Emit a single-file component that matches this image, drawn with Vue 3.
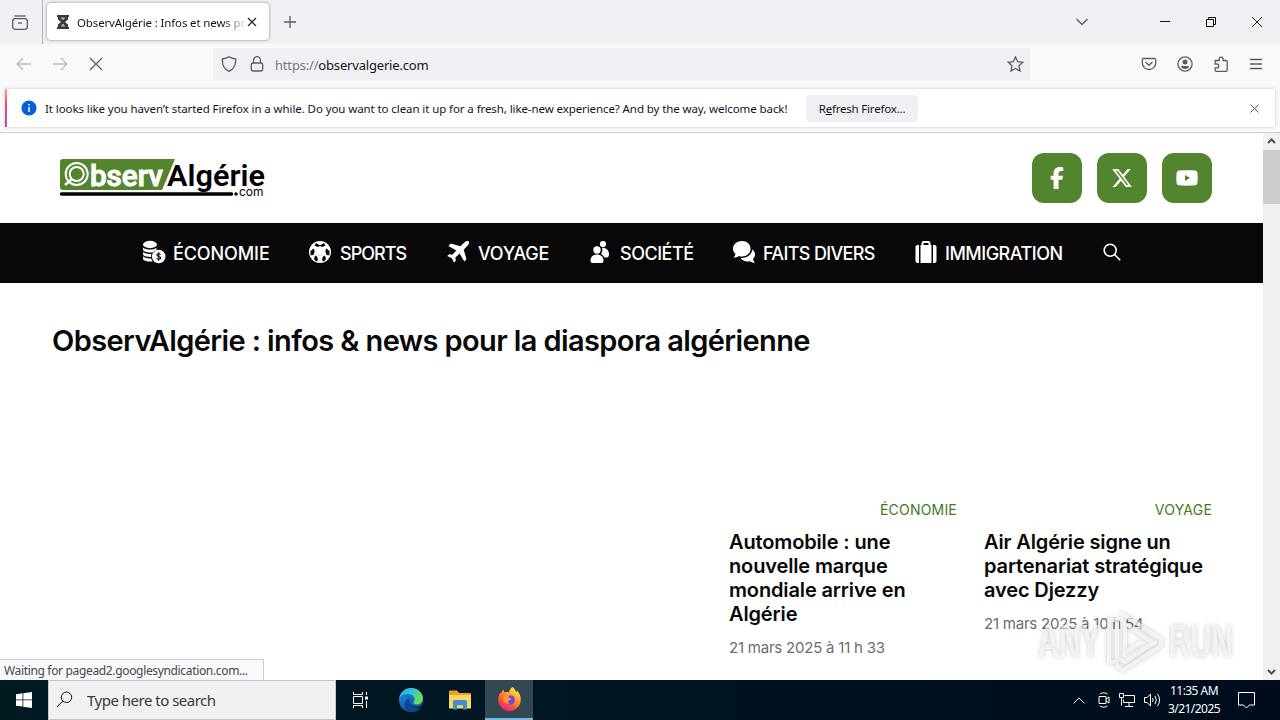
<template>
  <div class="screen">
    <!-- Tab strip -->
    <div class="tabstrip">
      <div class="view-box">
        <svg width="18" height="18" viewBox="0 0 18 18" class="line">
          <path d="M3.5 2h11" />
          <rect x="1.7" y="4.7" width="14.6" height="10.6" rx="2.5" />
          <path d="M7 9h4" />
        </svg>
      </div>
      <div class="tab">
        <svg width="12" height="14" viewBox="0 0 12 14" class="hourglass">
          <path d="M0 0h12v2h-1v2.500L8 7l3 2.500V12h1v2H0v-2h1V9.500L4 7 1 4.500V2H0z" fill="#38383d" />
          <path d="M3.500 2.500h5L6 5.200zM6 8.500l2.500 3h-5z" fill="#b5b5ba" />
        </svg>
        <span class="tab-title">ObservAlgérie : Infos et news po</span>
        <svg width="10" height="10" viewBox="0 0 10 10" class="dark">
          <path d="M1 1l8 8M9 1l-8 8" />
        </svg>
      </div>
      <svg width="12" height="12" viewBox="0 0 12 12" class="line plus">
        <path d="M6 0v12M0 6h12" />
      </svg>
      <svg width="14" height="8" viewBox="0 0 14 8" class="line chevron">
        <path d="M1.500 1L7 6.500 12.500 1" />
      </svg>
      <div class="window-buttons">
        <svg width="10" height="10" viewBox="0 0 10 10" class="black">
          <path d="M0 4.500h10" />
        </svg>
        <svg width="10" height="10" viewBox="0 0 10 10" class="black">
          <path d="M.5 2.500h7v7h-7zM2.500 2.500v-2h7v7h-2" />
        </svg>
        <svg width="10" height="10" viewBox="0 0 10 10" class="black thin">
          <path d="M0 0l10 10M10 0L0 10" />
        </svg>
      </div>
    </div>

    <!-- Address bar -->
    <div class="toolbar">
      <svg width="16" height="16" viewBox="0 0 16 16" class="line faded">
        <path d="M15 8H1.500M7 2L1.200 8 7 14" />
      </svg>
      <svg width="16" height="16" viewBox="0 0 16 16" class="line faded">
        <path d="M1 8h13.500M9 2l5.800 6L9 14" />
      </svg>
      <svg width="16" height="16" viewBox="0 0 16 16" class="line">
        <path d="M2 2l12 12M14 2L2 14" />
      </svg>
      <div class="urlbar">
        <svg width="16" height="16" viewBox="0 0 16 16" class="line">
          <path d="M8 .8c2 1.300 4.300 1.900 6.700 2.200C14.900 8.500 13.500 13 8 15.300 2.500 13 1.100 8.500 1.300 3 3.700 2.700 6 2.100 8 .8z" />
        </svg>
        <svg width="14" height="16" viewBox="0 0 14 16" class="line">
          <rect x="1.300" y="7" width="11.400" height="8" rx="1.800" />
          <path d="M3.500 7V4.200a3.500 3.500 0 0 1 7 0V7" />
        </svg>
        <span class="url"><i>https://</i>observalgerie.com</span>
        <svg width="17" height="16" viewBox="0 0 17 16" class="line">
          <path d="M8.500 1l2.200 4.700 5.100.6-3.800 3.500 1 5.100-4.500-2.500L4 14.900l1-5.100L1.200 6.300l5.100-.6z" />
        </svg>
      </div>
      <div class="tools">
        <svg width="16" height="16" viewBox="0 0 16 16" class="line">
          <path d="M2.500 2.500h11a1.200 1.200 0 0 1 1.200 1.200V7a6.700 6.500 0 0 1-13.400 0V3.700a1.200 1.200 0 0 1 1.200-1.200z" />
          <path d="M4.500 6L8 9.300 11.500 6" />
        </svg>
        <svg width="16" height="16" viewBox="0 0 16 16" class="line">
          <circle cx="8" cy="8" r="7.100" />
          <circle cx="8" cy="6" r="2.500" fill="#5b5b66" stroke="none" />
          <path d="M4 10h8c0 1.800-1.500 3-4 3s-4-1.200-4-3z" fill="#5b5b66" stroke="none" />
        </svg>
        <svg width="16" height="16" viewBox="0 0 16 16" class="line">
          <path d="M2.200 4.500h4V3a1.900 1.900 0 0 1 3.800 0v1.500h3.200a1 1 0 0 1 1 1v8.800a1 1 0 0 1-1 1h-10a1 1 0 0 1-1-1v-2.500h1.700a1.900 1.900 0 0 0 0-3.800H2.200z" />
        </svg>
        <svg width="14" height="12" viewBox="0 0 14 12" class="line">
          <path d="M1 1.500h12M1 6h12M1 10.500h12" />
        </svg>
      </div>
    </div>

    <!-- Notification -->
    <div class="notice-row">
      <div class="notice">
        <svg width="16" height="16" viewBox="0 0 16 16">
          <circle cx="8" cy="8" r="7.600" fill="#0560df" />
          <path d="M8 4v1.600M8 7v5" stroke="#fff" stroke-width="1.500" />
        </svg>
        <span class="notice-text">It looks like you haven’t started Firefox in a while. Do you want to clean it up for a fresh, like-new experience? And by the way, welcome back!</span>
        <button class="refresh">R<u>e</u>fresh Firefox...</button>
        <svg width="9" height="9" viewBox="0 0 9 9" class="line close-notice">
          <path d="M.5.500l8 8M8.500.5l-8 8" />
        </svg>
      </div>
    </div>

    <!-- Web page -->
    <div class="viewport">
      <main class="page">
        <header class="site-header">
          <svg width="210" height="44" viewBox="0 0 210 44" class="logo">
            <path d="M4 3h112l-13 31H4a3 3 0 0 1-3-3V6a3 3 0 0 1 3-3z" fill="#52852d" />
            <circle cx="17.700" cy="18" r="11" fill="none" stroke="#fff" stroke-width="2" />
            <circle cx="17.700" cy="18" r="7" fill="none" stroke="#fff" stroke-width="2" />
            <path d="M12.500 23.500l-6.500 5.500" stroke="#fff" stroke-width="2.600" />
            <text x="31" y="30" textLength="73" lengthAdjust="spacingAndGlyphs" class="logo-text white">bserv</text>
            <text x="108" y="30" textLength="98" lengthAdjust="spacingAndGlyphs" class="logo-text">Algérie</text>
            <path d="M2.500 38h170" stroke="#000" stroke-width="3.500" stroke-linecap="round" />
            <circle cx="177" cy="38" r="1.700" />
            <text x="180" y="39.500" textLength="24.500" lengthAdjust="spacingAndGlyphs" class="logo-com">com</text>
          </svg>
          <div class="social">
            <span class="social-btn">
              <svg width="14" height="22" viewBox="0 0 320 512">
                <path fill="#fff" d="M80 299v213h116V299h86l18-98H196v-35c0-52 20-72 73-72 16 0 30 0 37 1V8C292 4 257 0 236 0 129 0 80 50 80 160v41H14v98z" />
              </svg>
            </span>
            <span class="social-btn">
              <svg width="22" height="22" viewBox="0 0 24 24">
                <path fill="#fff" d="M18.240 2.250h3.310l-7.230 8.260 8.500 11.240h-6.650l-5.220-6.820-5.960 6.820H1.680l7.730-8.830L1.250 2.250h6.820l4.720 6.230zm-1.160 17.520h1.830L7.080 4.130H5.120z" />
              </svg>
            </span>
            <span class="social-btn">
              <svg width="22" height="16" viewBox="0 0 22 16">
                <path fill="#fff" fill-rule="evenodd" d="M3 .6C8 0 14 0 19 .6c1.700.3 2.300 1.300 2.500 3 .3 3 .3 6 0 9-.2 1.600-.9 2.400-2.500 2.700-5 .6-11 .6-16 0C1.400 15 .7 14.200.5 12.600c-.3-3-.3-6 0-9C.7 1.900 1.400.900 3 .6zM9 4.900v6L14 8z" />
              </svg>
            </span>
          </div>
        </header>

        <nav class="menu">
          <a v-for="item in menu" :key="item.label" class="menu-item" :class="item.icon">
            <svg width="24" height="24" viewBox="0 0 24 24" class="menu-icon">
              <g v-if="item.icon === 'coins'">
                <ellipse cx="8" cy="4.500" rx="7" ry="3.700" />
                <path d="M1 7.500c2.500 2.600 11 2.800 13.500.2v2.200c-1.600.6-3 1.500-3.900 2.600C6.500 12.700 2 12 1 10zM1 12c2 1.600 5 2.200 8.500 2.100-.4.900-.6 1.800-.6 2.900C5 17 2 16.300 1 14.500zM1 16.400c2 1.500 5 2 8.200 2 .3 1.200.8 2.200 1.500 3.100C6.500 21.800 1.500 21 1 19z" />
                <circle cx="16.700" cy="16.500" r="6.800" />
                <path d="M18.500 14.700c-.8-1.300-3.600-1.200-3.600.3 0 1.900 3.800 1 3.800 3 0 1.600-3.100 1.800-4 .2M16.700 12.300v8.500" fill="none" stroke="#080808" stroke-width="1.100" />
              </g>
              <g v-else-if="item.icon === 'ball'">
                <circle cx="12" cy="12" r="11" />
                <path fill="#080808" d="M12 7.700l4.100 3-1.600 4.800h-5l-1.600-4.800z" class="ball-core" />
                <path fill="#080808" d="M8 3l4 2.200L16 3l1.500 2.800-3.800 1.300-1.700-1-1.700 1-3.800-1.300zM2.500 11l3-2.500L6.800 11l-1.300 4-3 .2zM21.500 11l-3-2.500-1.300 2.500 1.300 4 3 .2zM6 19l1-3.500 2.500 1.500.3 3.500-1.800 1zM18 19l-1-3.500-2.500 1.500-.3 3.500 1.800 1z" />
                <path fill="#fff" d="M12 7.200l4.500 3.300-1.700 5.300H9.200l-1.700-5.300z" />
              </g>
              <path v-else-if="item.icon === 'plane'" d="M22.700 1.300c.8.9.3 2.800-1 4.200l-4 4.200 2.800 9.500-2.200 2.300-4.700-7.900-4.200 4 .4 3.300L8 22.600 5.700 18.300 1.400 16 3 14.300l3.400.4 3.900-4.200-7.900-4.600 2.300-2.300L14.400 6.300l4.200-4c1.300-1.300 3.200-1.800 4.100-1z" />
              <g v-else-if="item.icon === 'people'">
                <circle cx="14" cy="4" r="3.100" />
                <path d="M13 7.700c4.500 0 7 2.600 7 6.300 0 2.200-.7 3.500-2 3.500h-2.700c-.6-1.500-1.700-2.700-3.200-3.500 1.300-1.900 1.600-4.200.9-6.300z" />
                <circle cx="8" cy="10" r="3.700" />
                <path d="M1.500 20.500c0-8 13-8 13 0 0 1.700-.7 2.500-2 2.500h-9c-1.300 0-2-.8-2-2.500z" />
              </g>
              <g v-else-if="item.icon === 'chat'">
                <path d="M10 1C15 1 18.600 4.300 18.600 8.800S15 16.500 10 16.500c-1.300 0-2.300-.2-3.300-.6-1.400 1.100-3.200 1.600-5.200 1.500 1.200-1 1.800-2.200 2-3.500C1.800 12.500 1 10.800 1 8.800 1 4.300 5 1 10 1z" />
                <path d="M20.300 9.500c1.700 1.200 2.700 3 2.700 5 0 1.700-.7 3.200-2 4.500.3 1.500.9 2.800 2 3.800-2.200.1-4-.5-5.300-1.500-4 .7-7.500-.5-9-3.200 6 .2 11-3.200 11.600-8.600z" />
              </g>
              <path v-else fill-rule="evenodd" d="M7.500 5V3A2 2 0 0 1 9.500 1h5a2 2 0 0 1 2 2v2h1v18h-11V5zM9.500 5h5V3h-5zM5 5v18H3.500c-1.200 0-2-.8-2-2V7c0-1.200.8-2 2-2zM19 5v18h1.500c1.200 0 2-.8 2-2V7c0-1.200-.8-2-2-2z" />
            </svg>
            <span class="menu-label">{{ item.label }}</span>
          </a>
          <svg width="18" height="18" viewBox="0 0 18 18" class="menu-search">
            <circle cx="7.200" cy="7.200" r="6" />
            <path d="M11.500 11.500l5.700 5.700" />
          </svg>
        </nav>

        <h1>ObservAlgérie : infos &amp; news pour la diaspora algérienne</h1>

        <section class="cards">
          <article v-for="post in posts" :key="post.category" class="card">
            <span class="category">{{ post.category }}</span>
            <h2><span v-for="line in post.lines" :key="line">{{ line }}</span></h2>
            <time>{{ post.date }}</time>
          </article>
        </section>
      </main>
      <div class="scrollbar">
        <svg width="9" height="6" viewBox="0 0 9 6"><path d="M1 5l3.500-3.500L8 5" /></svg>
        <div class="thumb"></div>
        <svg width="9" height="6" viewBox="0 0 9 6" class="down"><path d="M1 1l3.500 3.500L8 1" /></svg>
      </div>
      <div class="status">Waiting for pagead2.googlesyndication.com...</div>
      <div class="watermark">
        <span>ANY</span>
        <svg width="60" height="66" viewBox="0 0 60 66">
          <path d="M4 12h8v42H4zM16 5l40 26v7L18 62l-6-4V50l8 4 28-19L20 16v28l16-10" />
        </svg>
        <span>RUN</span>
      </div>
    </div>

    <!-- Windows taskbar -->
    <div class="taskbar">
      <div class="start">
        <svg width="16" height="16" viewBox="0 0 16 16">
          <path fill="#fff" d="M0 2.200L6.500 1.300v6.200H0zM7.300 1.200L16 0v7.500H7.300zM0 8.300h6.500v6.300L0 13.700zM7.300 8.300H16V16l-8.700-1.200z" />
        </svg>
      </div>
      <div class="search">
        <svg width="17" height="17" viewBox="0 0 17 17" class="black">
          <circle cx="10.500" cy="6.300" r="5.200" />
          <path d="M6.700 10L1 16" />
        </svg>
        <span>Type here to search</span>
      </div>
      <div class="app task-view">
        <svg width="16" height="16" viewBox="0 0 16 16" class="white">
          <path d="M1.500 0v2.500h9V0M1.500 16v-2.500h9V16M1.500 4.500h9v7h-9zM14.500 0v3M14.500 9v7" />
          <path d="M13 4.500h3v3h-3z" fill="#fff" stroke="none" />
        </svg>
      </div>
      <div class="app">
        <svg width="24" height="24" viewBox="0 0 24 24">
          <defs>
            <linearGradient id="edgeTop" x1="0" y1="0" x2="1" y2=".5">
              <stop offset="0" stop-color="#27a8e6" />
              <stop offset=".5" stop-color="#31c6d5" />
              <stop offset="1" stop-color="#67df57" />
            </linearGradient>
            <linearGradient id="edgeBody" x1="0" y1="0" x2=".6" y2="1">
              <stop offset="0" stop-color="#1d94e0" />
              <stop offset="1" stop-color="#0b4f9e" />
            </linearGradient>
          </defs>
          <circle cx="12" cy="12" r="12" fill="url(#edgeBody)" />
          <path fill="url(#edgeTop)" d="M.3 10C1.500 4 6 0 12 0c7 0 12 5 12 10.500 0 3.500-2.700 6-6 6-2.700 0-4-1-3.700-1.900.2-.6 1.200-1.400 1.200-3.200C15.500 8.500 12.800 6 9 6 5 6 1.800 7.500.3 10z" />
          <path fill="#0e4386" d="M9.500 12.500C8 16.500 11 21 16 21c2.500 0 4.500-.7 6.500-2-2 3.400-5.700 5-9.500 5-5.200-.5-7.500-4-7.500-7.500 0-3 2-5.300 4.500-6z" />
          <path fill="#001722" d="M10.300 11.500c-1 4 2.500 7.700 7.500 7.500 2 0 4-.7 5.200-1.400.8-.4 1 .2.600.8l-.3.500c-2 1.100-4 1.400-6.600 1.100-5-.8-8.700-4.500-6.400-8.500z" />
        </svg>
      </div>
      <div class="app">
        <svg width="22" height="20" viewBox="0 0 22 20">
          <path fill="#e8a325" d="M0 1.500C0 .7.500.500 1 .5h7l2 2.500h11c.6 0 1 .4 1 1V7H0z" />
          <path fill="#fbd461" d="M0 5h22v13.500H0z" />
          <path fill="#3d90cf" d="M4 19.500v-8c0-.8.500-1.500 1.500-1.500h11c1 0 1.500.7 1.500 1.500v8h-4v-4.200H8v4.200z" />
        </svg>
      </div>
      <div class="app active">
        <svg width="23" height="24" viewBox="0 0 23 24">
          <defs>
            <linearGradient id="fox" x1=".8" y1="0" x2=".2" y2="1">
              <stop offset="0" stop-color="#fff04f" />
              <stop offset=".35" stop-color="#ffa52b" />
              <stop offset=".7" stop-color="#ff503d" />
              <stop offset="1" stop-color="#e31587" />
            </linearGradient>
          </defs>
          <path fill="url(#fox)" d="M14.500 0c2.200 1.500 3 3.300 3.500 5l1.200-1.300c2.300 2.500 3.600 5.300 3.600 8.500C22.800 18.800 17.800 24 11.400 24 5 24 .2 19 .2 12.800c0-3 1-5.400 2.300-7.600l.5 2C3.500 4.500 4.500 3.300 5.500 2.500l.8 3c1.500-.5 3-.6 4.500 0C11.500 3 12.700 1.200 14.500 0z" />
          <circle cx="12" cy="13" r="4.800" fill="#7542e5" />
          <path fill="#ff9a28" d="M5.500 8.500c2 .3 3.300-.7 5.700-.2l-1 2.100 3.200 1c-.3 1.700-2.600 1.700-3.200 2.800-.3 1 .3 2 1.800 2.200-3.500 1.200-7-1.400-7-5z" />
        </svg>
      </div>
      <div class="tray">
        <svg width="12" height="7" viewBox="0 0 12 7" class="white"><path d="M.7 6.300L6 1l5.300 5.300" /></svg>
        <svg width="12" height="16" viewBox="0 0 12 16" class="white">
          <path d="M1 4.500h7v7H1zM8 7l3-2v6L8 9M2 2c2-1.600 5.500-1.600 7.500 0M2 14c2 1.600 5.500 1.600 7.500 0" />
        </svg>
        <svg width="16" height="14" viewBox="0 0 16 14" class="white">
          <path d="M5.500 2.500h10v7h-11v-3M10 9.500v4M6 13.500h8M.5.500h4v4h-4zM2.500 4.500v8" />
        </svg>
        <svg width="17" height="14" viewBox="0 0 17 14" class="white">
          <path d="M.5 4.500h2.700L6.500 1v12L3.200 9.500H.5zM8.500 5q1.400 2 0 4M11 3q2.700 4 0 8M13.500 1q4.200 6 0 12" />
        </svg>
        <div class="clock"><span>11:35 AM</span><span>3/21/2025</span></div>
        <svg width="17" height="17" viewBox="0 0 17 17" class="white">
          <path d="M.5.500h16v12.500h-5L8.500 16l-3-3h-5z" />
        </svg>
      </div>
    </div>
  </div>
</template>

<script setup>
const menu = [
  { label: "ÉCONOMIE", icon: "coins" },
  { label: "SPORTS", icon: "ball" },
  { label: "VOYAGE", icon: "plane" },
  { label: "SOCIÉTÉ", icon: "people" },
  { label: "FAITS DIVERS", icon: "chat" },
  { label: "IMMIGRATION", icon: "case" },
];

const posts = [
  {
    category: "ÉCONOMIE",
    lines: ["Automobile : une", "nouvelle marque", "mondiale arrive en", "Algérie"],
    date: "21 mars 2025 à 11 h 33",
  },
  {
    category: "VOYAGE",
    lines: ["Air Algérie signe un", "partenariat stratégique", "avec Djezzy"],
    date: "21 mars 2025 à 10 h 54",
  },
];
</script>

<style>
body {
  margin: 0;
  overflow: hidden;
}
</style>

<style scoped>
.screen {
  width: 1280px;
  height: 720px;
  display: flex;
  flex-direction: column;
  overflow: hidden;
  background: #fff;
  color: #15141a;
  font-family: "Noto Sans", "Open Sans", sans-serif;
  font-size: 12px;
}
svg {
  flex: none;
  display: block;
}
.line,
.dark,
.black,
.white {
  fill: none;
  stroke: #5b5b66;
  stroke-width: 1.3;
}
.dark {
  stroke: #2b2a33;
}
.black {
  stroke: #111;
  stroke-width: 1;
}
.thin {
  stroke-width: 0.9;
}
.white {
  stroke: #fff;
  stroke-width: 1;
}
.faded {
  opacity: 0.4;
}

/* Tab strip */
.tabstrip {
  height: 44px;
  flex: none;
  display: flex;
  align-items: center;
  background: #f0f0f4;
}
.view-box {
  width: 43px;
  height: 44px;
  flex: none;
  box-sizing: border-box;
  padding: 14px 0 0 11px;
  border-right: 1px solid #b3b3b9;
}
.tab {
  width: 222px;
  height: 37px;
  flex: none;
  box-sizing: border-box;
  margin: 0 0 1px 4px;
  padding: 0 11px 0 10px;
  display: flex;
  align-items: center;
  border-radius: 4px;
  background: #fff;
  box-shadow: 0 0 3px rgba(0, 0, 0, 0.45);
}
.tab-title {
  width: 168px;
  flex: none;
  margin: 1px 2px 0 8px;
  overflow: hidden;
  white-space: nowrap;
  font-size: 11.5px;
  letter-spacing: -0.14px;
  mask-image: linear-gradient(to right, #000 145px, transparent 172px);
}
.plus {
  margin-left: 15px;
}
.chevron {
  margin-left: auto;
}
.window-buttons {
  display: flex;
  gap: 36px;
  margin: 0 18px 0 71px;
}

/* Address bar */
.toolbar {
  height: 44px;
  flex: none;
  display: flex;
  align-items: center;
  gap: 20px;
  box-sizing: border-box;
  padding: 0 17px 4px 16px;
  background: #f9f9fb;
}
.urlbar {
  width: 817px;
  height: 32px;
  box-sizing: border-box;
  margin-left: 89px;
  padding: 0 6px 0 8px;
  display: flex;
  align-items: center;
  background: #f0f0f4;
}
.urlbar svg + svg {
  margin-left: 13px;
}
.url {
  flex: 1;
  margin: 1px 0 0 11px;
  font-size: 13px;
  letter-spacing: -0.18px;
}
.url i {
  font-style: normal;
  color: #77777f;
}
.tools {
  flex: 1;
  display: flex;
  align-items: center;
  justify-content: flex-end;
  gap: 20px;
}

/* Notification */
.notice-row {
  height: 45px;
  flex: none;
  box-sizing: border-box;
  padding: 1px 5px 5px;
  background: #f9f9fb;
  border-bottom: 1px solid #cfcfd3;
}
.notice {
  height: 38px;
  box-sizing: border-box;
  padding: 0 16px 0 14px;
  display: flex;
  align-items: center;
  border-left: 2px solid;
  border-image: linear-gradient(#ffa45c, #e8458b 45%, #9059c9) 1;
  background: #fff;
  box-shadow: 0 0 3px rgba(0, 0, 0, 0.2);
}
.notice-text {
  width: 743px;
  margin: 1px 18px 0 8px;
  white-space: nowrap;
  font-size: 11.5px;
  letter-spacing: -0.09px;
}
.refresh {
  width: 112px;
  height: 27px;
  padding: 1px 0 0;
  border: none;
  border-radius: 4px;
  background: #f0f0f4;
  color: #15141a;
  font: inherit;
  font-size: 11.5px;
  letter-spacing: -0.2px;
}
.close-notice {
  margin-left: auto;
  stroke-width: 1;
}

/* Web page */
.viewport {
  position: relative;
  height: 547px;
  flex: none;
  display: flex;
}
.page {
  width: 1263px;
  font-family: Inter, sans-serif;
  color: #080808;
}
.site-header {
  height: 90px;
  box-sizing: border-box;
  padding: 0 51px 0 59px;
  display: flex;
  align-items: center;
  justify-content: space-between;
}
.logo {
  margin-top: -1px;
}
.logo-text {
  font: 600 30px Roboto, sans-serif;
  fill: #000;
}
.logo-text.white {
  font-weight: 500;
  fill: #fff;
}
.logo-com {
  font: 12.5px Inter, sans-serif;
}
.social {
  display: flex;
  gap: 15px;
}
.social-btn {
  width: 50px;
  height: 50px;
  display: grid;
  place-items: center;
  border-radius: 12px;
  background: #52852d;
}
.menu {
  height: 60px;
  padding-left: 142px;
  display: grid;
  grid-template-columns: 126px 98px 103px 103px 142px 149px 18px;
  column-gap: 40px;
  align-items: center;
  background: #080808;
  color: #fff;
}
.menu-item {
  display: flex;
  align-items: center;
  gap: 7px;
  white-space: nowrap;
}
.menu-icon {
  fill: #fff;
  margin-top: -2px;
}
.menu-label {
  font-size: 18px;
  font-weight: 500;
  letter-spacing: -0.5px;
}
.coins .menu-label {
  letter-spacing: -0.1px;
}
.ball .menu-label {
  margin-left: 1px;
  letter-spacing: -1px;
}
.plane .menu-label {
  margin-left: 1px;
  letter-spacing: -0.3px;
}
.chat .menu-label {
  letter-spacing: -0.65px;
}
.menu-search {
  fill: none;
  stroke: #fff;
  stroke-width: 1.6;
  margin-top: -2px;
}
h1 {
  height: 36px;
  margin: 40px 0 0 52px;
  font-size: 29px;
  font-weight: 600;
  line-height: 36px;
  letter-spacing: -0.61px;
  white-space: nowrap;
}
.cards {
  margin: 139px 51px 0 729px;
  display: grid;
  grid-template-columns: 228px 228px;
  column-gap: 27px;
}
.card {
  display: flex;
  flex-direction: column;
}
.category {
  align-self: flex-end;
  line-height: 24px;
  font-size: 14px;
  color: #3f7a1c;
  letter-spacing: 0.2px;
}
h2 {
  margin: 8px 0 9px;
  font-size: 20px;
  font-weight: 600;
  line-height: 24px;
  letter-spacing: -0.14px;
}
h2 span {
  display: block;
  white-space: nowrap;
}
time {
  font-size: 15px;
  line-height: 26px;
  letter-spacing: -0.22px;
  color: #6d6d6d;
}
.scrollbar {
  width: 17px;
  display: flex;
  flex-direction: column;
  align-items: center;
  box-sizing: border-box;
  padding: 5px 0;
  background: #f0f0f0;
}
.scrollbar path {
  fill: none;
  stroke: #505050;
  stroke-width: 2;
}
.thumb {
  width: 17px;
  height: 54px;
  margin-top: 6px;
  background: #cdcdcd;
}
.down {
  margin-top: auto;
}
.status {
  position: absolute;
  left: 0;
  bottom: 0;
  width: 264px;
  height: 21px;
  box-sizing: border-box;
  padding-left: 4px;
  border: 1px solid #cfcfd3;
  border-width: 1px 1px 0 0;
  background: #f9f9fb;
  line-height: 22px;
  white-space: nowrap;
  letter-spacing: -0.34px;
  color: #46464d;
}
.watermark {
  position: absolute;
  left: 1038px;
  top: 475px;
  display: flex;
  align-items: center;
  gap: 4px;
  color: rgba(255, 255, 255, 0.6);
  filter: drop-shadow(0 0 2px rgba(0, 0, 0, 0.34));
  font: bold 46px/66px "Liberation Sans", sans-serif;
}
.watermark span {
  width: 63px;
  transform: scaleX(0.64);
  transform-origin: left;
}
.watermark path {
  fill: none;
  stroke: rgba(255, 255, 255, 0.65);
  stroke-width: 4;
}

/* Taskbar */
.taskbar {
  height: 40px;
  flex: none;
  display: flex;
  background: linear-gradient(to right, #001a22 0%, #001522 45%, #000c1c 100%);
  color: #fff;
}
.start,
.app {
  width: 48px;
  display: grid;
  place-items: center;
}
.app {
  width: 49px;
}
.app.task-view {
  width: 50px;
  box-sizing: border-box;
  padding-right: 3px;
}
.app.active {
  width: 48px;
  box-sizing: border-box;
  margin-left: 1px;
  background: #344851;
  border-bottom: 2px solid #76b9ed;
}
.search {
  width: 288px;
  box-sizing: border-box;
  padding-left: 7px;
  display: flex;
  align-items: center;
  gap: 14px;
  border: 1px solid #c8c8c8;
  background: #f1f1f1;
  color: #3a3a3a;
  font-size: 15px;
  letter-spacing: -0.5px;
}
.search svg {
  margin-top: -2px;
}
.tray {
  margin-left: auto;
  padding-right: 25px;
  display: flex;
  align-items: center;
}
.tray svg + svg {
  margin-left: 13px;
}
.tray svg:nth-child(3),
.tray svg:nth-child(4) {
  margin-left: 9px;
}
.clock {
  width: 56px;
  margin: 0 16px 0 5px;
  display: flex;
  flex-direction: column;
  align-items: center;
  line-height: 18px;
  letter-spacing: -0.55px;
}
</style>
